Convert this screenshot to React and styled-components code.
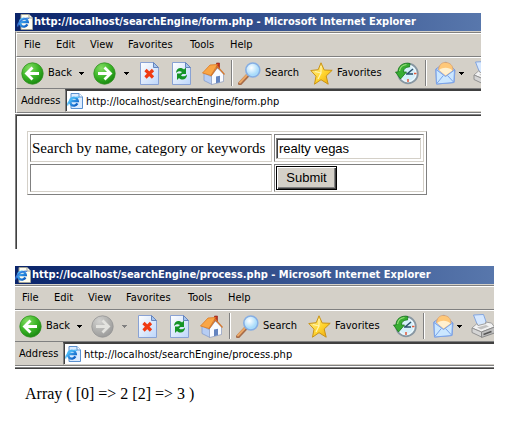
import React, { useId } from "react";
import styled, { createGlobalStyle } from "styled-components";

const face = "#d4d0c8";
const shade = "#808080";
const dark = "#404040";
const uiFont = '"DejaVu Sans Condensed", "DejaVu Sans", sans-serif';

const GlobalStyle = createGlobalStyle`
  *, *::before, *::after { box-sizing: border-box; }
  body { margin: 0; background: #fff; color: #000; }
  button, input { font: inherit; color: inherit; margin: 0; }
`;

const Page = styled.main`
  display: flex;
  flex-direction: column;
  gap: 17px;
  padding: 13px 13px 0 15px;
`;

const Window = styled.section`
  margin-right: ${(p) => (p.$framed ? 13 : 0)}px;
  font: 11px/14px ${uiFont};
  overflow: hidden;
`;

const TitleBar = styled.header`
  display: flex;
  align-items: center;
  gap: 1px;
  height: 18px;
  padding-left: ${(p) => (p.$framed ? 2 : 0)}px;
  background: linear-gradient(90deg, #0a246a, #5877ac);
  color: #fff;
`;

const Title = styled.h1`
  margin: 0;
  font: bold 11px/14px ${uiFont};
  white-space: nowrap;
`;

const Chrome = styled.div`
  background: ${face};
  border-top: 1px solid ${face};
  border-left: ${(p) => (p.$framed ? `1px solid ${shade}` : "0")};
`;

const Bar = styled.div`
  display: flex;
  align-items: center;
  border-top: 1px solid #fff;
  border-bottom: 1px solid ${shade};
  border-left: ${(p) => (p.$framed ? "1px solid #fff" : "0")};
  white-space: nowrap;
`;

const MenuBar = styled(Bar).attrs({ as: "nav" })`
  height: 25px;
  border-top: 1px solid ${shade};
  box-shadow: inset 0 1px #fff;
  padding-left: 7px;
  gap: 16px;
`;

const MenuItem = styled.button`
  border: 0;
  padding: 0;
  background: none;
  width: ${(p) => p.$width}px;
  text-align: left;
  white-space: nowrap;
`;

const ToolBar = styled(Bar)`
  height: 32px;
  padding-left: 4px;
  overflow: hidden;
`;

const ToolButton = styled.button`
  display: flex;
  align-items: center;
  flex: none;
  gap: 4px;
  width: ${(p) => p.$width}px;
  height: 26px;
  border: 0;
  padding: 0;
  background: none;
  white-space: nowrap;

  svg { flex: none; }
`;

const Separator = styled.span`
  flex: none;
  width: 2px;
  height: 26px;
  margin-right: ${(p) => p.$after}px;
  border-left: 1px solid ${shade};
  border-right: 1px solid #fff;
`;

const AddressBar = styled(Bar)`
  height: 24px;
  border-top: 0;
  padding-left: 4px;
  align-items: stretch;
`;

const AddressLabel = styled.label`
  width: 44px;
  flex: none;
  line-height: 24px;
`;

const AddressBox = styled.div`
  display: flex;
  align-items: center;
  flex: 1;
  gap: 3px;
  padding-left: 1px;
  background: #fff;
  height: 23px;
  border: solid;
  border-width: 2px 0 1px 1px;
  border-color: ${dark} transparent ${face} ${shade};
  box-shadow: inset 1px 0 ${dark};
`;

const AddressInput = styled.input`
  flex: 1;
  min-width: 0;
  height: 18px;
  border: 0;
  padding: 0;
  background: none;
  outline: none;
`;

const Viewport = styled.div`
  margin-top: 1px;
  background: #fff;
  border-top: 1px solid ${shade};
  border-left: ${(p) => (p.$framed ? `1px solid ${shade}` : "0")};
  font: 16px/18px "Liberation Serif", serif;
`;

const Document = styled.div`
  border-top: 1px solid ${dark};
  border-left: ${(p) => (p.$framed ? `1px solid ${dark}` : "0")};
  padding: ${(p) => (p.$framed ? "15px 10px 54px" : "16px 10px")};
`;

const FormTable = styled.table`
  width: 400px;
  max-width: 100%;
  table-layout: fixed;
  border: 1px solid;
  border-color: ${face} ${shade} ${shade} ${face};
  border-spacing: 2px;
  font-size: 15px;
`;

const Cell = styled.td`
  width: ${(p) => p.$width};
  height: 28px;
  padding: 1px;
  border: 1px solid;
  border-color: ${shade} ${face} ${face} ${shade};
  white-space: nowrap;
`;

const KeywordInput = styled.input`
  display: block;
  width: 145px;
  height: 21px;
  padding: 1px 2px 0;
  background: #fff;
  border: 1px solid;
  border-color: ${shade} ${face} ${face} ${shade};
  box-shadow: inset 1px 1px ${dark};
  font: 13px/16px "Liberation Sans", sans-serif;
  outline: none;
`;

const SubmitButton = styled.button`
  display: block;
  width: 61px;
  height: 24px;
  padding: 0;
  background: ${face};
  border: 1px solid #000;
  box-shadow: inset 1px 1px #fff, inset -1px -1px ${dark}, inset -2px -2px ${shade};
  font: 13px/20px "Liberation Sans", sans-serif;
`;

const Output = styled.p`
  margin: 0;
`;

const Caret = ({ dim }) => (
  <svg width="5" height="3" viewBox="0 0 5 3" shapeRendering="crispEdges">
    <path d="M0 0h5v1H4v1H3v1H2V2H1V1H0z" fill={dim ? "#808080" : "#000"} />
  </svg>
);

const PageIcon = ({ flip }) => {
  const id = useId();
  return (
    <svg width="16" height="16" viewBox="0 0 16 16">
      <defs>
        <linearGradient id={id} x2="1" y2="1">
          <stop stopColor="#52c4ff" />
          <stop offset="1" stopColor="#0755be" />
        </linearGradient>
      </defs>
      <path d="M4 .5h8l3.500 3.500v11.500H4z" fill={flip ? "#dcecff" : "#fffdf0"} stroke={flip ? "#5b91cf" : "#a3a496"} />
      <path d="M12 .5V4h3.500" fill="#fff" stroke={flip ? "#5b91cf" : "#a3a496"} />
      <path d="M10.400 10.400a4 4 0 1 1 .4-2.400H4" fill="none" stroke={`url(#${id})`} strokeWidth="2.300" />
      <path d="M1 12.500C-.5 9 8 2.800 12 4.500" fill="none" stroke={flip ? "#49b8f5" : "#3978d8"} strokeWidth="1.300" />
    </svg>
  );
};

const ArrowIcon = ({ forward, dim }) => {
  const id = useId();
  return (
    <svg width="23" height="23" viewBox="0 0 23 23">
      <defs>
        <radialGradient id={id} cx=".35" cy=".25" r=".8">
          <stop stopColor={dim ? "#d2d2d0" : "#83dc63"} />
          <stop offset=".55" stopColor={dim ? "#b1b1af" : "#3bb527"} />
          <stop offset="1" stopColor={dim ? "#999" : "#16850f"} />
        </radialGradient>
      </defs>
      <circle cx="11.500" cy="11.500" r="10.700" fill={`url(#${id})`} stroke={dim ? "#969696" : "#359223"} strokeWidth=".8" />
      <path
        d={forward ? "M5 11.500h12M11.500 5.500l6 6-6 6" : "M18 11.500H6M11.500 5.500l-6 6 6 6"}
        fill="none"
        stroke={dim ? "#e3e3df" : "#fff"}
        strokeWidth="2.800"
      />
    </svg>
  );
};

const Sheet = ({ children }) => {
  const id = useId();
  return (
    <svg width="19" height="23" viewBox="0 0 19 23">
      <defs>
        <linearGradient id={id} x2="1" y2="1">
          <stop stopColor="#fff" />
          <stop offset="1" stopColor="#bdd6fa" />
        </linearGradient>
      </defs>
      <path d="M.5.5h13l5 5v17H.5z" fill={`url(#${id})`} stroke="#89a2d4" />
      <path d="M13.500.5v5h5z" fill="#a6c5ef" stroke="#6685bd" />
      {children}
    </svg>
  );
};

const StopIcon = () => (
  <Sheet>
    <path d="M5.500 8l7.500 7.500M13 8l-7.500 7.500" stroke="#f03a12" strokeWidth="3.200" />
  </Sheet>
);

const RefreshIcon = () => (
  <Sheet>
    <path d="M4 11C4 6 9 4.500 12 7.500l2-2V12H8l2-2C8 8.500 6 9 4 11z" fill="#159426" />
    <path d="M15 12.500c0 5-5 6.500-8 3.500l-2 2v-6.500h6l-2 2c2 1.500 4 1 6-1z" fill="#159426" />
  </Sheet>
);

const HomeIcon = () => (
  <svg width="23" height="23" viewBox="0 0 23 23">
    <path d="M14.500 1h3v6h-3z" fill="#c4311e" stroke="#8d2518" strokeWidth=".6" />
    <path d="M2 11l8 4v7.500l-8-4z" fill="#b7cdf3" stroke="#7d96c8" strokeWidth=".7" />
    <path d="M9.500 13.500L15.500 6l6 6v7.500l-12 3z" fill="#f9fbff" stroke="#8999bd" strokeWidth=".7" />
    <path d="M.5 11L8 3l7.500-.5L9 13.500z" fill="#f9a647" stroke="#dc7923" strokeWidth=".8" />
    <path d="M9 14l6.500-9.500 7 8" fill="none" stroke="#d5772d" strokeWidth="1.300" />
    <path d="M14 14.500l4-.8v6.600l-4 1z" fill="#6484bf" />
  </svg>
);

const SearchIcon = () => {
  const id = useId();
  return (
    <svg width="23" height="23" viewBox="0 0 23 23">
      <defs>
        <radialGradient id={id} cx=".4" cy=".35">
          <stop stopColor="#fff" />
          <stop offset="1" stopColor="#a9dcfb" />
        </radialGradient>
      </defs>
      <path d="M9.500 13.500l-7.500 8" stroke="#a66b48" strokeWidth="4" strokeLinecap="round" />
      <path d="M9 13l-7 7.500" stroke="#eba866" strokeWidth="2" strokeLinecap="round" />
      <circle cx="14.800" cy="8" r="7" fill={`url(#${id})`} stroke="#86aee3" strokeWidth="1.600" />
    </svg>
  );
};

const StarIcon = () => {
  const id = useId();
  return (
    <svg width="23" height="23" viewBox="0 0 23 23">
      <defs>
        <linearGradient id={id} x2="1" y2="1">
          <stop stopColor="#fff3a0" />
          <stop offset=".55" stopColor="#ffd52f" />
          <stop offset="1" stopColor="#eaa20b" />
        </linearGradient>
      </defs>
      <path
        d="M11 .8l3.200 7.200 8 .3-6 5.700 2 8.200-7.200-4.500-6.500 4.500 1.500-8L.8 8.500l7.400-.8z"
        fill={`url(#${id})`}
        stroke="#c99316"
        strokeLinejoin="round"
      />
      <path d="M11 4v7l-6-1.500M11 11l-3 6" fill="none" stroke="#fff4b2" strokeWidth="1.200" />
    </svg>
  );
};

const HistoryIcon = () => (
  <svg width="24" height="23" viewBox="0 0 24 23">
    <circle cx="13" cy="11.500" r="9.800" fill="#d5effa" stroke="#8896a1" strokeWidth="1.800" />
    <circle cx="13" cy="11.500" r="8" fill="none" stroke="#f6fcff" />
    <path d="M13 17v3M19 11.500h2.500" stroke="#e25b3c" strokeWidth="1.500" />
    <path d="M12 12l6-5M11 12h7" stroke="#2d536e" strokeWidth="1.600" />
    <path d="M15 1.500C8 0 3 4 3 10H.5l5 7 6-7H8.500c0-3 2-5 6-5z" fill="#38ad32" stroke="#167719" strokeWidth=".8" />
    <path d="M4.500 9c.5-4 3-6 7-6.500" fill="none" stroke="#98df7b" strokeWidth="1.200" />
  </svg>
);

const MailIcon = () => (
  <svg width="21" height="24" viewBox="0 0 21 24">
    <path d="M.8 8L11 1l9 8-1 12.500L1.500 23z" fill="#a9c9fa" stroke="#7f9ddb" />
    <path d="M3.500 8.500C4 3 8 1 11 1.500c4 .3 7 3 7 7.500l-7 6z" fill="#ffc879" stroke="#d99e68" strokeWidth=".7" />
    <path d="M1 8.500l9.500 7 9-6.500-.7 12.500L1.500 23z" fill="#cbe7ff" stroke="#7ba3e8" />
    <path d="M4 9c4-3 10-3 13.500.5l-7 5z" fill="#fff0cf" />
    <path d="M1.800 22.500l6.500-8M18.500 21l-6-6.500" fill="none" stroke="#7ba3e8" />
  </svg>
);

const PrinterIcon = () => (
  <svg width="24" height="24" viewBox="0 0 24 24">
    <path d="M2.500 1l10-.5 3.500 10-9 2z" fill="#d6e8ff" stroke="#83a5df" />
    <path d="M1 14l5-4.500 1 2 8-2-.5-1.500 6 1 3 4-13 5z" fill="#f2f2f2" stroke="#a0a0a0" />
    <path d="M1 14l9.500 4v5L1 18.500z" fill="#d5d5d5" stroke="#929292" />
    <path d="M10.500 18l13-5v6l-13 4.500z" fill="#bfbfbf" stroke="#888" />
    <path d="M12.500 20.500l8-3" stroke="#565656" strokeWidth="1.500" />
    <path d="M6 13.500l9-2.500 3 1.500-8 3z" fill="#c2c2c2" />
  </svg>
);

const menus = [
  ["File", 16],
  ["Edit", 18],
  ["View", 22],
  ["Favorites", 46],
  ["Tools", 24],
  ["Help", 24],
];

function Browser({ url, framed, canGoForward, children }) {
  const addressId = useId();
  return (
    <Window $framed={framed}>
      <TitleBar $framed={framed}>
        <PageIcon />
        <Title>{url} - Microsoft Internet Explorer</Title>
      </TitleBar>
      <Chrome $framed={framed}>
        <MenuBar $framed={framed}>
          {menus.map(([name, width]) => (
            <MenuItem key={name} type="button" $width={width}>
              {name}
            </MenuItem>
          ))}
        </MenuBar>
        <ToolBar $framed={framed}>
          <ToolButton type="button" $width={58}><ArrowIcon />Back</ToolButton>
          <ToolButton type="button" $width={14} aria-label="Back history"><Caret /></ToolButton>
          <ToolButton type="button" $width={31} aria-label="Forward"><ArrowIcon forward dim={!canGoForward} /></ToolButton>
          <ToolButton type="button" $width={16} aria-label="Forward history"><Caret dim={!canGoForward} /></ToolButton>
          <ToolButton type="button" $width={32} aria-label="Stop"><StopIcon /></ToolButton>
          <ToolButton type="button" $width={30} aria-label="Refresh"><RefreshIcon /></ToolButton>
          <ToolButton type="button" $width={29} aria-label="Home"><HomeIcon /></ToolButton>
          <Separator $after={5} />
          <ToolButton type="button" $width={72}><SearchIcon />Search</ToolButton>
          <ToolButton type="button" $width={85}><StarIcon />Favorites</ToolButton>
          <ToolButton type="button" $width={30} aria-label="History"><HistoryIcon /></ToolButton>
          <Separator $after={8} />
          <ToolButton type="button" $width={24} aria-label="Mail"><MailIcon /></ToolButton>
          <ToolButton type="button" $width={14} aria-label="Mail options"><Caret /></ToolButton>
          <ToolButton type="button" $width={24} aria-label="Print"><PrinterIcon /></ToolButton>
        </ToolBar>
        <AddressBar $framed={framed}>
          <AddressLabel htmlFor={addressId}>Address</AddressLabel>
          <AddressBox>
            <PageIcon flip />
            <AddressInput id={addressId} defaultValue={url} spellCheck={false} />
          </AddressBox>
        </AddressBar>
      </Chrome>
      <Viewport $framed={framed}>
        <Document $framed={framed}>{children}</Document>
      </Viewport>
    </Window>
  );
}

export default function App() {
  return (
    <>
      <GlobalStyle />
      <Page>
        <Browser url="http://localhost/searchEngine/form.php" framed canGoForward>
          <form onSubmit={(e) => e.preventDefault()}>
            <FormTable>
              <tbody>
                <tr>
                  <Cell $width="242px">
                    <label htmlFor="keywords">Search by name, category or keywords</label>
                  </Cell>
                  <Cell $width="auto">
                    <KeywordInput id="keywords" defaultValue="realty vegas" spellCheck={false} />
                  </Cell>
                </tr>
                <tr>
                  <Cell />
                  <Cell>
                    <SubmitButton type="submit">Submit</SubmitButton>
                  </Cell>
                </tr>
              </tbody>
            </FormTable>
          </form>
        </Browser>
        <Browser url="http://localhost/searchEngine/process.php">
          <Output>Array ( [0] =&gt; 2 [2] =&gt; 3 )</Output>
        </Browser>
      </Page>
    </>
  );
}
